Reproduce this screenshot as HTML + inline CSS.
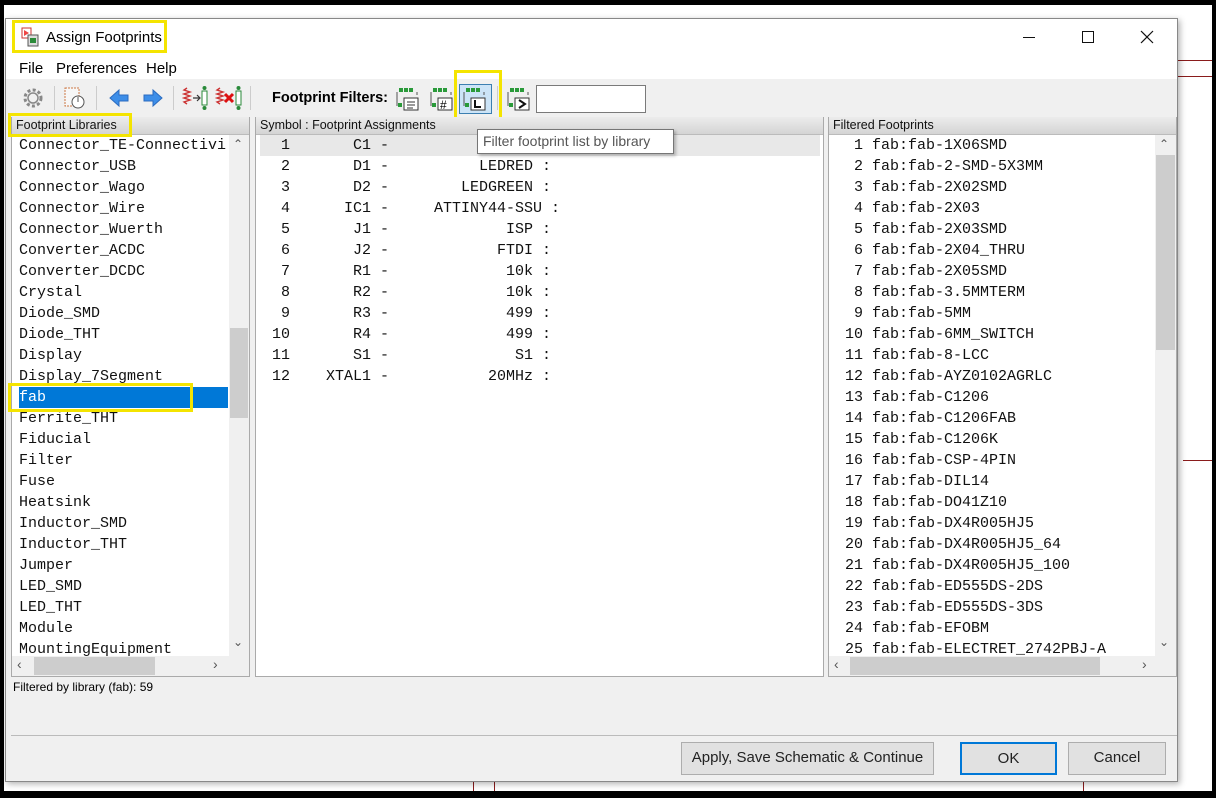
<!DOCTYPE html>
<html><head><meta charset="utf-8"><style>
*{margin:0;padding:0;box-sizing:border-box}
body{width:1216px;height:798px;background:#000;position:relative;overflow:hidden;font-family:"Liberation Sans",sans-serif;font-size:14px;color:#000}
.a{position:absolute}
.mono{font-family:"Liberation Mono",monospace;font-size:15px;color:#111}
.hdr{position:absolute;height:18px;background:linear-gradient(#ececec,#d4d4d4);border-bottom:1px solid #bbb;font-size:12.5px;line-height:17px;padding-left:4px;color:#111}
.list div{height:21px;line-height:21px;white-space:pre}
.yb{position:absolute;border:3px solid #f4e400}
.btn{position:absolute;background:#e1e1e1;border:1px solid #adadad;font-size:15px;text-align:center;line-height:30px;color:#222}
</style></head><body>
<div class="a" style="left:4px;top:5px;width:1208px;height:786px;background:#fff"></div>
<div class="a" style="left:1177px;top:60px;width:35px;height:1px;background:#8a1c1c"></div>
<div class="a" style="left:1177px;top:76px;width:35px;height:1px;background:#8a1c1c"></div>
<div class="a" style="left:473px;top:781px;width:1px;height:10px;background:#8a1c1c"></div>
<div class="a" style="left:494px;top:781px;width:1px;height:10px;background:#8a1c1c"></div>
<div class="a" style="left:1083px;top:781px;width:1px;height:10px;background:#8a1c1c"></div>
<div class="a" style="left:1183px;top:460px;width:29px;height:1px;background:#8a1c1c"></div>
<div class="a" style="left:5px;top:18px;width:1173px;height:764px;background:#f0f0f0;border:1px solid #888;box-shadow:2px 2px 6px rgba(0,0,0,.3)"></div>
<div class="a" style="left:6px;top:19px;width:1171px;height:60px;background:#fff"></div>
<svg class="a" style="left:20px;top:27px" width="20" height="20"><rect x="2" y="1" width="9" height="10" fill="#fff" stroke="#c33"/><path d="M4 3l5 3-5 3z" fill="#e44"/><rect x="8" y="8" width="10" height="11" fill="#ddd" stroke="#555"/><rect x="10" y="11" width="6" height="5" fill="#2a8a3a"/></svg>
<div class="a" style="left:46px;top:29px;font-size:15px">Assign Footprints</div>
<div class="yb" style="left:12px;top:20px;width:155px;height:33px"></div>
<div class="a" style="left:1023px;top:37px;width:12px;height:1px;background:#111"></div>
<div class="a" style="left:1082px;top:31px;width:12px;height:12px;border:1px solid #111"></div>
<svg class="a" style="left:1140px;top:30px" width="14" height="14"><path d="M1 1L13 13M13 1L1 13" stroke="#111" stroke-width="1.2"/></svg>
<div class="a" style="left:19px;top:60px;font-size:15px">File</div>
<div class="a" style="left:56px;top:60px;font-size:15px">Preferences</div>
<div class="a" style="left:146px;top:60px;font-size:15px">Help</div>
<svg class="a" style="left:20px;top:86px" width="26" height="24"><circle cx="13" cy="12" r="8" fill="none" stroke="#888" stroke-width="3" stroke-dasharray="3 2.3"/><circle cx="13" cy="12" r="5" fill="#f0f0f0" stroke="#888" stroke-width="1.5"/></svg>
<div class="a" style="left:54px;top:86px;width:1px;height:24px;background:#ccc"></div>
<svg class="a" style="left:62px;top:86px" width="26" height="24"><rect x="3" y="2" width="14" height="18" fill="#f7f7f7" stroke="#c74" stroke-dasharray="2 1"/><circle cx="16" cy="16" r="6" fill="#fff" stroke="#555"/><path d="M16 11v5" stroke="#555"/></svg>
<div class="a" style="left:96px;top:86px;width:1px;height:24px;background:#ccc"></div>
<svg class="a" style="left:108px;top:88px" width="24" height="20"><path d="M2 10l9-8v5h9v6h-9v5z" fill="#3d8ee8" stroke="#2b6bbf"/></svg>
<svg class="a" style="left:140px;top:88px" width="24" height="20"><path d="M22 10l-9-8v5h-9v6h9v5z" fill="#3d8ee8" stroke="#2b6bbf"/></svg>
<div class="a" style="left:173px;top:86px;width:1px;height:24px;background:#ccc"></div>
<svg class="a" style="left:182px;top:84px" width="28" height="28"><path d="M5 4l-3 2 6 2-6 2 6 2-6 2 6 2-6 2 3 2" fill="none" stroke="#c33" stroke-width="1.4"/><path d="M11 14h6m-2-3l3 3-3 3" fill="none" stroke="#333" stroke-width="1.2"/><rect x="20" y="7" width="5" height="14" fill="#fff" stroke="#2a8a3a"/><circle cx="22.5" cy="4" r="2" fill="#2a8a3a"/><circle cx="22.5" cy="24" r="2" fill="#2a8a3a"/></svg>
<svg class="a" style="left:215px;top:84px" width="30" height="28"><path d="M5 4l-3 2 6 2-6 2 6 2-6 2 6 2-6 2 3 2" fill="none" stroke="#c33" stroke-width="1.4"/><path d="M10 10l8 8M18 10l-8 8" stroke="#d11" stroke-width="3"/><rect x="21" y="7" width="5" height="14" fill="#fff" stroke="#2a8a3a"/><circle cx="23.5" cy="4" r="2" fill="#2a8a3a"/><circle cx="23.5" cy="24" r="2" fill="#2a8a3a"/></svg>
<div class="a" style="left:250px;top:86px;width:1px;height:24px;background:#ccc"></div>
<div class="a" style="left:272px;top:90px;font-size:14.5px;font-weight:bold">Footprint Filters:</div>
<svg class="a" style="left:394px;top:86px" width="28" height="26"><g fill="#2a9a3a"><rect x="5" y="2" width="4" height="4"/><rect x="10" y="2" width="4" height="4"/><rect x="15" y="2" width="4" height="4"/><rect x="4" y="17" width="4" height="4"/></g><path d="M3 6v14M23 6v3" stroke="#555" fill="none"/><rect x="10" y="12" width="14" height="12" fill="#fff" stroke="#333"/><path d="M13 16h8M13 19h8M13 22h6" stroke="#333"/></svg>
<svg class="a" style="left:428px;top:86px" width="28" height="26"><g fill="#2a9a3a"><rect x="5" y="2" width="4" height="4"/><rect x="10" y="2" width="4" height="4"/><rect x="15" y="2" width="4" height="4"/><rect x="4" y="17" width="4" height="4"/></g><path d="M3 6v14M23 6v3" stroke="#555" fill="none"/><rect x="10" y="12" width="14" height="12" fill="#fff" stroke="#333"/><text x="12" y="23" font-size="12" font-family="Liberation Sans">#</text></svg>
<div class="a" style="left:459px;top:84px;width:33px;height:30px;background:#cce4f7;border:1px solid #3c7fb1"></div>
<svg class="a" style="left:461px;top:86px" width="28" height="26"><g fill="#2a9a3a"><rect x="5" y="2" width="4" height="4"/><rect x="10" y="2" width="4" height="4"/><rect x="15" y="2" width="4" height="4"/><rect x="4" y="17" width="4" height="4"/></g><path d="M3 6v14M23 6v3" stroke="#555" fill="none"/><rect x="10" y="12" width="14" height="12" fill="#fff" stroke="#333"/><path d="M14 14v7h6" stroke="#111" stroke-width="2" fill="none"/></svg>
<div class="yb" style="left:454px;top:70px;width:48px;height:58px"></div>
<div class="a" style="left:497px;top:86px;width:1px;height:24px;background:#ccc"></div>
<svg class="a" style="left:505px;top:86px" width="28" height="26"><g fill="#2a9a3a"><rect x="5" y="2" width="4" height="4"/><rect x="10" y="2" width="4" height="4"/><rect x="15" y="2" width="4" height="4"/><rect x="4" y="17" width="4" height="4"/></g><path d="M3 6v14M23 6v3" stroke="#555" fill="none"/><rect x="10" y="12" width="14" height="12" fill="#fff" stroke="#333"/><path d="M14 14l6 4-6 4" stroke="#111" stroke-width="2" fill="none"/></svg>
<div class="a" style="left:536px;top:85px;width:110px;height:28px;background:#fff;border:1px solid #7a7a7a"></div>
<div class="a" style="left:11px;top:117px;width:239px;height:560px;border:1px solid #aaa;background:#fff"></div>
<div class="hdr" style="left:12px;top:117px;width:237px">Footprint Libraries</div>
<div class="a mono list" style="left:19px;top:135px;width:209px;height:521px;overflow:hidden"><div>Connector_TE-Connectivi</div><div>Connector_USB</div><div>Connector_Wago</div><div>Connector_Wire</div><div>Connector_Wuerth</div><div>Converter_ACDC</div><div>Converter_DCDC</div><div>Crystal</div><div>Diode_SMD</div><div>Diode_THT</div><div>Display</div><div>Display_7Segment</div><div style="background:#0078d7;color:#fff;margin-left:-2px;padding-left:2px;width:211px">fab</div><div>Ferrite_THT</div><div>Fiducial</div><div>Filter</div><div>Fuse</div><div>Heatsink</div><div>Inductor_SMD</div><div>Inductor_THT</div><div>Jumper</div><div>LED_SMD</div><div>LED_THT</div><div>Module</div><div>MountingEquipment</div></div>
<div class="a" style="left:229px;top:135px;width:20px;height:521px;background:#f0f0f0"></div>
<div class="a" style="left:230px;top:328px;width:18px;height:90px;background:#cdcdcd"></div>
<div class="a" style="left:233px;top:137px;font-size:12px;color:#555">&#8963;</div>
<div class="a" style="left:233px;top:635px;font-size:12px;color:#555">&#8964;</div>
<div class="a" style="left:12px;top:656px;width:237px;height:20px;background:#f0f0f0"></div>
<div class="a" style="left:34px;top:657px;width:121px;height:18px;background:#cdcdcd"></div>
<div class="a" style="left:17px;top:656px;font-size:14px;color:#555">&#8249;</div>
<div class="a" style="left:213px;top:656px;font-size:14px;color:#555">&#8250;</div>
<div class="yb" style="left:8px;top:113px;width:124px;height:24px"></div>
<div class="yb" style="left:8px;top:383px;width:185px;height:29px"></div>
<div class="a" style="left:255px;top:117px;width:569px;height:560px;border:1px solid #aaa;background:#fff"></div>
<div class="hdr" style="left:256px;top:117px;width:567px">Symbol : Footprint Assignments</div>
<div class="a" style="left:260px;top:135px;width:560px;height:21px;background:#e8e8e8"></div>
<div class="a mono list" style="left:263px;top:135px"><div>  1       C1 -</div><div>  2       D1 -          LEDRED :</div><div>  3       D2 -        LEDGREEN :</div><div>  4      IC1 -     ATTINY44-SSU :</div><div>  5       J1 -             ISP :</div><div>  6       J2 -            FTDI :</div><div>  7       R1 -             10k :</div><div>  8       R2 -             10k :</div><div>  9       R3 -             499 :</div><div> 10       R4 -             499 :</div><div> 11       S1 -              S1 :</div><div> 12    XTAL1 -           20MHz :</div></div>
<div class="a" style="left:477px;top:129px;width:197px;height:25px;background:#fff;border:1px solid #767676;box-shadow:2px 2px 3px rgba(0,0,0,.25);font-size:14px;line-height:23px;padding-left:5px;color:#555">Filter footprint list by library</div>
<div class="a" style="left:828px;top:117px;width:349px;height:560px;border:1px solid #aaa;background:#fff"></div>
<div class="hdr" style="left:829px;top:117px;width:347px">Filtered Footprints</div>
<div class="a mono list" style="left:836px;top:135px;width:318px;height:521px;overflow:hidden"><div>  1 fab:fab-1X06SMD</div><div>  2 fab:fab-2-SMD-5X3MM</div><div>  3 fab:fab-2X02SMD</div><div>  4 fab:fab-2X03</div><div>  5 fab:fab-2X03SMD</div><div>  6 fab:fab-2X04_THRU</div><div>  7 fab:fab-2X05SMD</div><div>  8 fab:fab-3.5MMTERM</div><div>  9 fab:fab-5MM</div><div> 10 fab:fab-6MM_SWITCH</div><div> 11 fab:fab-8-LCC</div><div> 12 fab:fab-AYZ0102AGRLC</div><div> 13 fab:fab-C1206</div><div> 14 fab:fab-C1206FAB</div><div> 15 fab:fab-C1206K</div><div> 16 fab:fab-CSP-4PIN</div><div> 17 fab:fab-DIL14</div><div> 18 fab:fab-DO41Z10</div><div> 19 fab:fab-DX4R005HJ5</div><div> 20 fab:fab-DX4R005HJ5_64</div><div> 21 fab:fab-DX4R005HJ5_100</div><div> 22 fab:fab-ED555DS-2DS</div><div> 23 fab:fab-ED555DS-3DS</div><div> 24 fab:fab-EFOBM</div><div> 25 fab:fab-ELECTRET_2742PBJ-A</div></div>
<div class="a" style="left:1155px;top:135px;width:21px;height:521px;background:#f0f0f0"></div>
<div class="a" style="left:1156px;top:155px;width:19px;height:195px;background:#cdcdcd"></div>
<div class="a" style="left:1159px;top:137px;font-size:12px;color:#555">&#8963;</div>
<div class="a" style="left:1159px;top:635px;font-size:12px;color:#555">&#8964;</div>
<div class="a" style="left:829px;top:656px;width:347px;height:20px;background:#f0f0f0"></div>
<div class="a" style="left:850px;top:657px;width:250px;height:18px;background:#cdcdcd"></div>
<div class="a" style="left:834px;top:656px;font-size:14px;color:#555">&#8249;</div>
<div class="a" style="left:1142px;top:656px;font-size:14px;color:#555">&#8250;</div>
<div class="a" style="left:13px;top:680px;font-size:12px">Filtered by library (fab): 59</div>
<div class="a" style="left:11px;top:735px;width:1166px;height:1px;background:#bbb"></div>
<div class="btn" style="left:681px;top:742px;width:253px;height:33px">Apply, Save Schematic &amp; Continue</div>
<div class="btn" style="left:960px;top:742px;width:97px;height:33px;border:2px solid #0078d7;line-height:29px">OK</div>
<div class="btn" style="left:1068px;top:742px;width:98px;height:33px">Cancel</div>
</body></html>
